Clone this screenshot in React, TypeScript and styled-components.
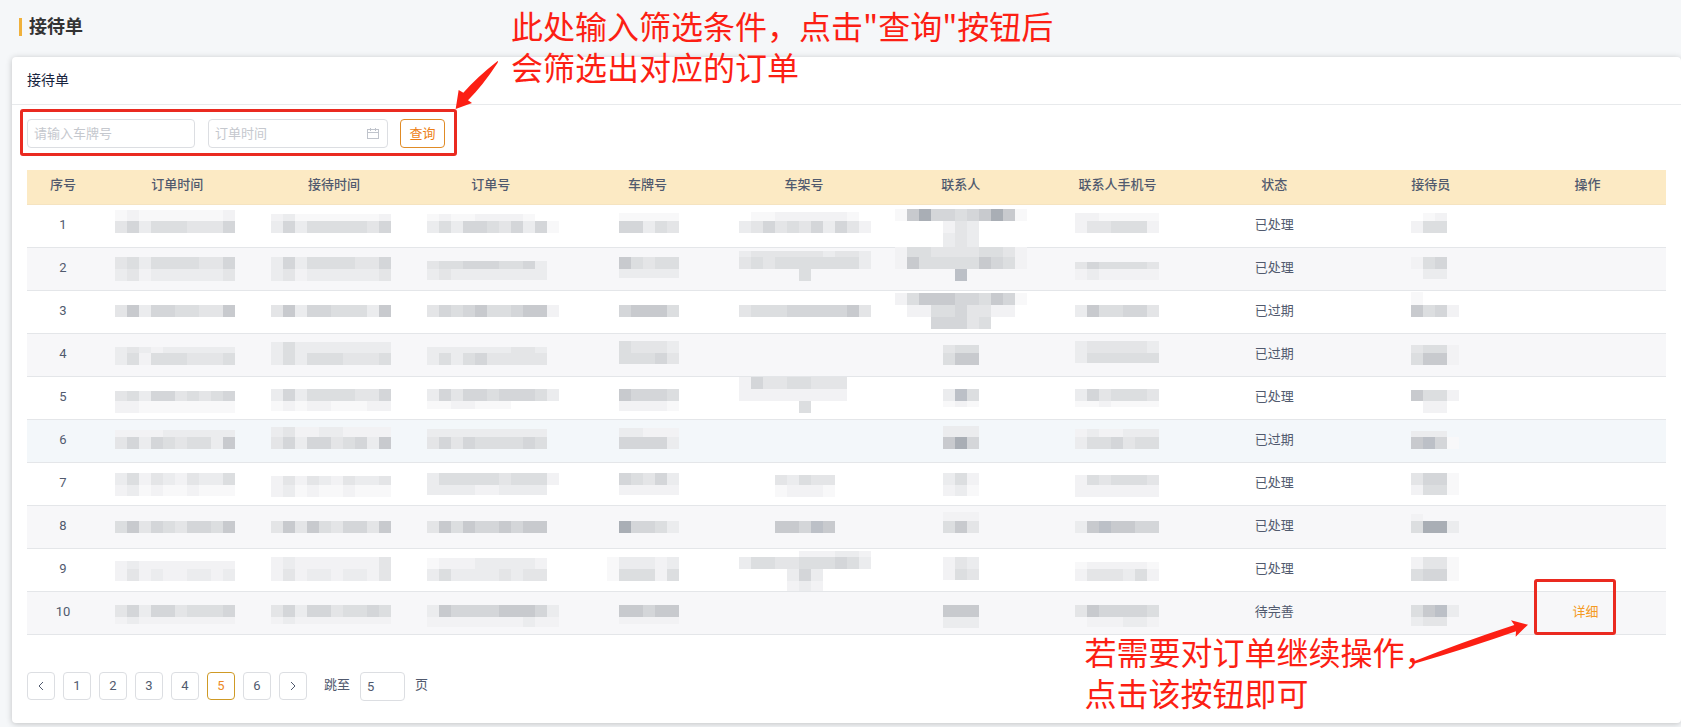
import React from 'react';
import styled, { createGlobalStyle } from 'styled-components';

const RED = '#fc1f14';

const GlobalStyle = createGlobalStyle`
  *, *::before, *::after { box-sizing: border-box; }
  body {
    margin: 0;
    background: #f5f7f9;
    color: #515a6e;
    font: 13px/20px Roboto, "Noto Sans CJK SC", sans-serif;
    overflow-x: hidden;
  }
  button, input { font: inherit; color: inherit; }
`;

const Page = styled.div`
  padding: 16px 0 4px 12px;
`;

const PageTitle = styled.h1`
  display: flex;
  align-items: center;
  gap: 7px;
  margin: 0 0 19px 7px;
  height: 22px;
  font-size: 18px;
  line-height: 22px;
  font-weight: 700;
  color: #333;

  &::before {
    content: '';
    width: 3px;
    height: 18px;
    background: #f0b13c;
  }
`;

const Card = styled.section`
  background: #fff;
  border-radius: 4px;
  box-shadow: 0 1px 6px rgba(0, 0, 0, 0.22);
`;

const CardHeader = styled.h2`
  margin: 0;
  height: 48px;
  padding: 0 15px;
  border-bottom: 1px solid #e8eaec;
  font-size: 14px;
  line-height: 46px;
  font-weight: 400;
  color: #17233d;
`;

const CardBody = styled.div`
  padding: 14px 15px 22px;
`;

const Filters = styled.form`
  position: relative;
  z-index: 1;
  display: inline-flex;
  margin-bottom: 22px;
  vertical-align: top;
`;

const Field = styled.label<{ $width: number; $gap: number }>`
  display: flex;
  align-items: center;
  width: ${(p) => p.$width}px;
  height: 29px;
  margin-right: ${(p) => p.$gap}px;
  padding: 0 8px 0 6px;
  border: 1px solid #dcdee2;
  border-radius: 4px;
  background: #fff;
`;

const TextInput = styled.input`
  flex: 1;
  min-width: 0;
  padding: 0;
  border: 0;
  outline: 0;
  background: none;

  &::placeholder { color: #c5c8ce; opacity: 1; }
`;

const QueryButton = styled.button`
  width: 45px;
  height: 29px;
  padding: 0;
  border: 1px solid #e08b25;
  border-radius: 4px;
  background: #fff;
  color: #ed7f14;
`;

const FilterFrame = styled.span`
  position: absolute;
  inset: -10px -12px -8px -7px;
  border: 3px solid #ea2a20;
  border-radius: 3px;
  pointer-events: none;
`;

const Note = styled.p<{ $left: number; $top: number }>`
  position: absolute;
  left: ${(p) => p.$left}px;
  top: ${(p) => p.$top}px;
  margin: 0;
  font: 32px/41px "Noto Sans CJK SC", sans-serif;
  color: ${RED};
  text-align: left;
  white-space: nowrap;
  pointer-events: none;
`;

const Arrow = styled.svg<{ $left: number; $top: number }>`
  position: absolute;
  left: ${(p) => p.$left}px;
  top: ${(p) => p.$top}px;
  fill: ${RED};
  pointer-events: none;
`;

const Table = styled.table`
  width: 100%;
  table-layout: fixed;
  border-collapse: separate;
  border-spacing: 0;
`;

const HeadCell = styled.th<{ $width?: number }>`
  width: ${(p) => (p.$width ? `${p.$width}px` : 'auto')};
  height: 35px;
  padding: 0 0 4px;
  border-bottom: 1px solid #f5e3c0;
  background: #fceac4;
  font-weight: 500;
  color: #515a6e;
`;

const Row = styled.tr<{ $tone: 'plain' | 'stripe' | 'hover' }>`
  background: ${(p) => ({ plain: '#fff', stripe: '#f7f7f9', hover: '#f3f7fa' })[p.$tone]};
`;

const Cell = styled.td`
  height: 43px;
  padding: 0 0 2px;
  border-bottom: 1px solid #e4e6e9;
  text-align: center;
`;

const MosaicCell = styled(Cell)`
  padding: 0;
  vertical-align: top;
`;

const MosaicSvg = styled.svg`
  display: block;
  width: 100%;
  height: 42px;
  overflow: visible;
`;

const Action = styled.span`
  position: relative;
  z-index: 1;
  display: inline-block;
  margin-right: 4px;
`;

const DetailLink = styled.a`
  color: #f59a23;
  text-decoration: none;
`;

const ActionFrame = styled.span`
  position: absolute;
  left: -39px;
  top: -23px;
  width: 82px;
  height: 56px;
  border: 3px solid #ea2a20;
  border-radius: 3px;
  pointer-events: none;
`;

const Pager = styled.nav`
  display: flex;
  align-items: flex-start;
  gap: 8px;
  margin-top: 37px;
  line-height: 26px;
`;

const PageButton = styled.button<{ $active?: boolean }>`
  display: flex;
  align-items: center;
  justify-content: center;
  width: 28px;
  height: 28px;
  padding: 0;
  border: 1px solid ${(p) => (p.$active ? '#cf9a25' : '#dcdee2')};
  border-radius: 4px;
  background: #fff;
  color: ${(p) => (p.$active ? '#ed8a26' : '#515a6e')};
`;

const Jump = styled.label`
  display: flex;
  gap: 10px;
  margin-left: 9px;
`;

const JumpInput = styled.input`
  width: 45px;
  height: 29px;
  padding: 0 6px;
  border: 1px solid #dcdee2;
  border-radius: 4px;
  background: #fff;
`;

/* Grey tones of the masked values, from the lightest to the darkest. */
const TONES = ['', '#f8f8f9', '#f2f2f4', '#ebecee', '#e4e5e7', '#dcdee0', '#d4d6d9', '#c8cace', '#bcc0c7', '#a9aeb5'];

/* [x, y, height, one tone digit per 12px block] */
type Band = [number, number, number, string];

function Mosaic({ bands }: { bands: Band[] }) {
  return (
    <MosaicCell>
      <MosaicSvg shapeRendering="crispEdges" aria-hidden="true">
        {bands.map(([x, y, h, tones], b) =>
          tones.split('').map((t, i) =>
            t === '.' ? null : (
              <rect key={`${b}-${i}`} x={x + i * 12} y={y} width={12} height={h} fill={TONES[Number(t)]} />
            ),
          ),
        )}
      </MosaicSvg>
    </MosaicCell>
  );
}

type Tone = 'plain' | 'stripe' | 'hover';
interface Order {
  status: string;
  tone: Tone;
  ordered: Band[];
  received: Band[];
  orderNo: Band[];
  plate: Band[];
  vin: Band[];
  contact: Band[];
  phone: Band[];
  clerk: Band[];
  detail?: boolean;
}

const orders: Order[] = [
  {
    status: '已处理', tone: 'plain',
    ordered: [[16, 5, 11, '1211111112'], [16, 16, 12, '4635554446']],
    received: [[15, 9, 7, '2311111112'], [15, 16, 12, '3635555546']],
    orderNo: [[15, 9, 7, '121122221'], [15, 16, 12, '35366546361']],
    plate: [[50, 8, 8, '11111'], [50, 16, 12, '66354']],
    vin: [[25, 7, 9, '112222221'], [13, 16, 12, '34645463642']],
    contact: [[13, 4, 12, '17966567971'], [61, 16, 12, '243'], [61, 28, 15, '343']],
    phone: [[36, 8, 8, '2211111'], [36, 16, 12, '2445552']],
    clerk: [[58, 8, 8, '.12'], [58, 16, 12, '255']],
  },
  {
    status: '已处理', tone: 'stripe',
    ordered: [[16, 9, 12, '4535555446'], [16, 21, 12, '3423333334']],
    received: [[15, 9, 12, '3635555446'], [15, 21, 12, '3423333334']],
    orderNo: [[15, 13, 8, '4556665563'], [15, 21, 11, '3433333333']],
    plate: [[50, 9, 12, '75455'], [50, 21, 9, '33333']],
    vin: [[13, 3, 6, '34444443443'], [13, 9, 12, '45455555553'], [73, 21, 12, '5']],
    contact: [[13, -1, 10, '25544445542'], [13, 9, 12, '27555557652'], [73, 21, 12, '8']],
    phone: [[36, 14, 7, '4655554'], [36, 21, 11, '2322222']],
    clerk: [[58, 9, 12, '256'], [58, 21, 10, '.33']],
  },
  {
    status: '已过期', tone: 'plain',
    ordered: [[16, 14, 12, '4736655447']],
    received: [[15, 14, 12, '4736655537']],
    orderNo: [[15, 14, 12, '46567556772']],
    plate: [[50, 14, 12, '67775']],
    vin: [[13, 14, 12, '45556666674']],
    contact: [[13, 2, 12, '25777665761'], [25, 14, 12, '225564422'], [49, 26, 12, '66645']],
    phone: [[36, 14, 12, '3755664']],
    clerk: [[58, 1, 13, '1'], [58, 14, 12, '7562']],
  },
  {
    status: '已过期', tone: 'stripe',
    ordered: [[16, 13, 6, '3432333333'], [16, 19, 12, '3525554445']],
    received: [[15, 8, 11, '3533333333'], [15, 19, 12, '3535554445']],
    orderNo: [[15, 13, 6, '3333333443'], [15, 19, 12, '3535644444']],
    plate: [[50, 7, 12, '54443'], [50, 19, 11, '55564']],
    vin: [],
    contact: [[61, 11, 8, '455'], [61, 19, 12, '577']],
    phone: [[36, 7, 12, '3444443'], [36, 19, 10, '3555555']],
    clerk: [[58, 11, 8, '4552'], [58, 19, 12, '5772']],
  },
  {
    status: '已处理', tone: 'plain',
    ordered: [[16, 14, 10, '4536645456'], [16, 24, 12, '2211111111']],
    received: [[15, 12, 12, '3635555446'], [15, 24, 10, '1212211122']],
    orderNo: [[15, 12, 12, '36466566653'], [15, 24, 8, '1122111']],
    plate: [[50, 12, 12, '76665'], [50, 24, 10, '22221']],
    vin: [[13, 0, 12, '264455444'], [13, 12, 12, '222222222'], [73, 24, 12, '5']],
    contact: [[61, 12, 12, '385'], [61, 24, 6, '121']],
    phone: [[36, 12, 12, '3645554'], [36, 24, 6, '1121111']],
    clerk: [[58, 13, 11, '7552'], [58, 24, 12, '.22']],
  },
  {
    status: '已过期', tone: 'hover',
    ordered: [[16, 10, 7, '2222333333'], [16, 17, 12, '4636545537']],
    received: [[15, 7, 10, '3422332222'], [15, 17, 12, '4636645637']],
    orderNo: [[15, 9, 8, '3333333333'], [15, 17, 12, '4646555565']],
    plate: [[50, 8, 9, '33222'], [50, 17, 12, '66663']],
    vin: [],
    contact: [[61, 6, 11, '333'], [61, 17, 12, '796']],
    phone: [[36, 9, 8, '2322333'], [36, 17, 12, '3556455']],
    clerk: [[58, 11, 6, '333'], [58, 17, 12, '7861']],
  },
  {
    status: '已处理', tone: 'plain',
    ordered: [[16, 10, 12, '3524324335'], [16, 22, 11, '2312112111']],
    received: [[15, 13, 9, '2424324334'], [15, 22, 12, '2312112111']],
    orderNo: [[15, 10, 12, '35555545552'], [15, 22, 10, '3333223333']],
    plate: [[50, 10, 12, '65463'], [50, 22, 10, '22222']],
    vin: [[49, 12, 10, '43544'], [49, 22, 12, '12221']],
    contact: [[61, 10, 12, '352'], [61, 22, 11, '231']],
    phone: [[36, 12, 10, '2545554'], [36, 22, 12, '2222222']],
    clerk: [[58, 10, 12, '4661'], [58, 22, 10, '2551']],
  },
  {
    status: '已处理', tone: 'stripe',
    ordered: [[16, 15, 12, '5746546657']],
    received: [[15, 15, 12, '4747546647']],
    orderNo: [[15, 15, 12, '4757667677']],
    plate: [[50, 15, 12, '96653']],
    vin: [[49, 15, 12, '77687']],
    contact: [[61, 6, 9, '222'], [61, 15, 12, '574']],
    phone: [[36, 15, 12, '3787766']],
    clerk: [[58, 8, 7, '2'], [58, 15, 12, '5993']],
  },
  {
    status: '已处理', tone: 'plain',
    ordered: [[16, 12, 8, '2322222222'], [16, 20, 12, '2423223323']],
    received: [[15, 8, 12, '2322222224'], [15, 20, 12, '2423323324']],
    orderNo: [[15, 9, 11, '1222333332'], [15, 20, 12, '3533334344']],
    plate: [[38, 8, 12, '133323'], [38, 20, 12, '155525']],
    vin: [[73, 2, 6, '222332'], [13, 8, 12, '35544555653'], [61, 20, 12, '363'], [61, 32, 10, '232']],
    contact: [[61, 8, 12, '243'], [61, 20, 11, '254']],
    phone: [[36, 13, 7, '1222221'], [36, 20, 12, '2444352']],
    clerk: [[58, 8, 12, '2441'], [58, 20, 12, '5661']],
  },
  {
    status: '待完善', tone: 'stripe', detail: true,
    ordered: [[16, 13, 12, '4636645556'], [16, 25, 7, '2322222222']],
    received: [[15, 13, 12, '4636645565'], [15, 25, 7, '2322222222']],
    orderNo: [[15, 13, 12, '37666677763'], [15, 25, 10, '22222222322']],
    plate: [[50, 13, 12, '77677'], [50, 25, 7, '22222']],
    vin: [],
    contact: [[61, 13, 12, '777'], [61, 25, 11, '333']],
    phone: [[36, 13, 12, '4766665'], [36, 25, 10, '.222332']],
    clerk: [[58, 13, 12, '5783'], [58, 25, 9, '344']],
  },
];

const columns = ['订单时间', '接待时间', '订单号', '车牌号', '车架号', '联系人', '联系人手机号', '状态', '接待员', '操作'];

function CalendarIcon() {
  return (
    <svg width="12" height="12" viewBox="0 0 12 12" fill="none" stroke="#c0c4cc" aria-hidden="true">
      <path d="M.5 1.5h11v9H.5zM.5 4.5h11M3.5 0v3M8.5 0v3" shapeRendering="crispEdges" />
    </svg>
  );
}

function Chevron({ d }: { d: string }) {
  return (
    <svg width="8" height="10" viewBox="0 0 8 10" fill="none" stroke="#515a6e" aria-hidden="true">
      <path d={d} />
    </svg>
  );
}

export default function App() {
  return (
    <>
      <GlobalStyle />
      <Page>
        <PageTitle>接待单</PageTitle>
        <Card>
          <CardHeader>接待单</CardHeader>
          <CardBody>
            <Filters onSubmit={(e: React.FormEvent) => e.preventDefault()}>
              <Field $width={168} $gap={13}>
                <TextInput placeholder="请输入车牌号" aria-label="车牌号" />
              </Field>
              <Field $width={180} $gap={12}>
                <TextInput placeholder="订单时间" aria-label="订单时间" />
                <CalendarIcon />
              </Field>
              <QueryButton type="submit">查询</QueryButton>
              <FilterFrame />
              <Arrow $left={428} $top={-59} width="44" height="50" viewBox="0 0 132 150">
                <path d="M128 3Q131 4 127 10Q84 76 39 121L51 129L2 147L11 90L25 98Q68 50 128 3Z" />
              </Arrow>
              <Note $left={484} $top={-114}>
                此处输入筛选条件，点击"查询"按钮后
                <br />
                会筛选出对应的订单
              </Note>
            </Filters>
            <Table>
              <thead>
                <tr>
                  <HeadCell scope="col" $width={72}>序号</HeadCell>
                  {columns.map((c) => (
                    <HeadCell scope="col" key={c}>{c}</HeadCell>
                  ))}
                </tr>
              </thead>
              <tbody>
                {orders.map((o, i) => (
                  <Row key={i} $tone={o.tone}>
                    <Cell>{i + 1}</Cell>
                    <Mosaic bands={o.ordered} />
                    <Mosaic bands={o.received} />
                    <Mosaic bands={o.orderNo} />
                    <Mosaic bands={o.plate} />
                    <Mosaic bands={o.vin} />
                    <Mosaic bands={o.contact} />
                    <Mosaic bands={o.phone} />
                    <Cell>{o.status}</Cell>
                    <Mosaic bands={o.clerk} />
                    <Cell>
                      {o.detail && (
                        <Action>
                          <DetailLink href="#detail">详细</DetailLink>
                          <ActionFrame />
                          <Arrow $left={-163} $top={15} width="120" height="52" viewBox="0 0 360 156">
                            <path d="M6 135Q160 74 313 24L303 10L354 23L317 59L318 43Q180 92 7 142Z" />
                          </Arrow>
                          <Note $left={-488} $top={29}>
                            若需要对订单继续操作，
                            <br />
                            点击该按钮即可
                          </Note>
                        </Action>
                      )}
                    </Cell>
                  </Row>
                ))}
              </tbody>
            </Table>
            <Pager aria-label="分页">
              <PageButton type="button" aria-label="上一页">
                <Chevron d="M6 1L2 5L6 9" />
              </PageButton>
              {[1, 2, 3, 4, 5, 6].map((n) => (
                <PageButton type="button" key={n} $active={n === 5}>{n}</PageButton>
              ))}
              <PageButton type="button" aria-label="下一页">
                <Chevron d="M2 1L6 5L2 9" />
              </PageButton>
              <Jump>
                跳至
                <JumpInput defaultValue="5" />
                页
              </Jump>
            </Pager>
          </CardBody>
        </Card>
      </Page>
    </>
  );
}
